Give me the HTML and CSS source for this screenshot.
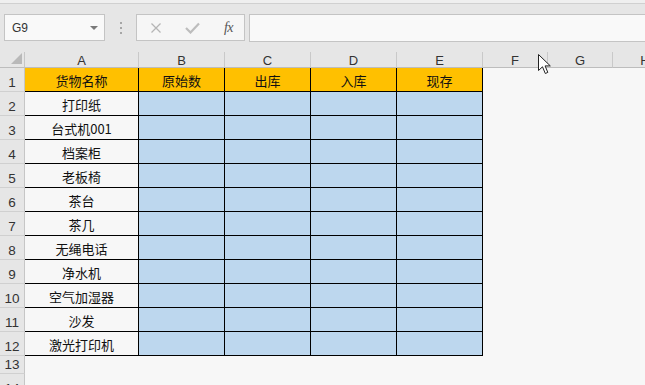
FILE: index.html
```html
<!DOCTYPE html>
<html lang="zh-CN">
<head>
    <meta charset="UTF-8">
    <title>货物库存</title>
    <link rel="stylesheet" href="styles.css">
</head>
<body>
    <div class="ribbon-edge"></div>

    <!-- Formula bar -->
    <div class="formula-bar">
        <div class="name-box">
            <span>G9</span>
            <svg class="caret" width="8" height="4" viewBox="0 0 8 4"><path d="M0 0H8L4 4Z" fill="#7a7a7a"/></svg>
        </div>
        <div class="grip"><i></i><i></i><i></i></div>
        <div class="fx-buttons">
            <svg class="btn" width="12" height="12" viewBox="0 0 12 12"><path d="M1.5 1.5L10.5 10.5M10.5 1.5L1.5 10.5" stroke="#b5b5b5" stroke-width="1.3"/></svg>
            <svg class="btn" width="15" height="12" viewBox="0 0 15 12"><path d="M1 6L5.5 10.5L14 1.5" stroke="#bdbdbd" stroke-width="2.2" fill="none"/></svg>
            <span class="fx">fx</span>
        </div>
        <div class="formula-input"></div>
    </div>

    <!-- Sheet grid -->
    <div class="sheet">
        <div class="corner">
            <svg width="11" height="11" viewBox="0 0 11 11"><path d="M11 0V11H0Z" fill="#b9b9b9"/></svg>
        </div>
        <div class="col-head">A</div>
        <div class="col-head">B</div>
        <div class="col-head">C</div>
        <div class="col-head">D</div>
        <div class="col-head">E</div>
        <div class="col-head">F</div>
        <div class="col-head">G</div>
        <div class="col-head">H</div>

        <div class="row-head">1</div>
        <div class="cell title">货物名称</div>
        <div class="cell title">原始数</div>
        <div class="cell title">出库</div>
        <div class="cell title">入库</div>
        <div class="cell title">现存</div>
        <div class="empty"></div><div class="empty"></div><div class="empty"></div>

        <div class="row-head">2</div>
        <div class="cell name">打印纸</div>
        <div class="cell data"></div><div class="cell data"></div><div class="cell data"></div><div class="cell data"></div>
        <div class="empty"></div><div class="empty"></div><div class="empty"></div>

        <div class="row-head">3</div>
        <div class="cell name">台式机001</div>
        <div class="cell data"></div><div class="cell data"></div><div class="cell data"></div><div class="cell data"></div>
        <div class="empty"></div><div class="empty"></div><div class="empty"></div>

        <div class="row-head">4</div>
        <div class="cell name">档案柜</div>
        <div class="cell data"></div><div class="cell data"></div><div class="cell data"></div><div class="cell data"></div>
        <div class="empty"></div><div class="empty"></div><div class="empty"></div>

        <div class="row-head">5</div>
        <div class="cell name">老板椅</div>
        <div class="cell data"></div><div class="cell data"></div><div class="cell data"></div><div class="cell data"></div>
        <div class="empty"></div><div class="empty"></div><div class="empty"></div>

        <div class="row-head">6</div>
        <div class="cell name">茶台</div>
        <div class="cell data"></div><div class="cell data"></div><div class="cell data"></div><div class="cell data"></div>
        <div class="empty"></div><div class="empty"></div><div class="empty"></div>

        <div class="row-head">7</div>
        <div class="cell name">茶几</div>
        <div class="cell data"></div><div class="cell data"></div><div class="cell data"></div><div class="cell data"></div>
        <div class="empty"></div><div class="empty"></div><div class="empty"></div>

        <div class="row-head">8</div>
        <div class="cell name">无绳电话</div>
        <div class="cell data"></div><div class="cell data"></div><div class="cell data"></div><div class="cell data"></div>
        <div class="empty"></div><div class="empty"></div><div class="empty"></div>

        <div class="row-head">9</div>
        <div class="cell name">净水机</div>
        <div class="cell data"></div><div class="cell data"></div><div class="cell data"></div><div class="cell data"></div>
        <div class="empty"></div><div class="empty"></div><div class="empty"></div>

        <div class="row-head">10</div>
        <div class="cell name">空气加湿器</div>
        <div class="cell data"></div><div class="cell data"></div><div class="cell data"></div><div class="cell data"></div>
        <div class="empty"></div><div class="empty"></div><div class="empty"></div>

        <div class="row-head">11</div>
        <div class="cell name">沙发</div>
        <div class="cell data"></div><div class="cell data"></div><div class="cell data"></div><div class="cell data"></div>
        <div class="empty"></div><div class="empty"></div><div class="empty"></div>

        <div class="row-head">12</div>
        <div class="cell name">激光打印机</div>
        <div class="cell data"></div><div class="cell data"></div><div class="cell data"></div><div class="cell data"></div>
        <div class="empty"></div><div class="empty"></div><div class="empty"></div>

        <div class="row-head short">13</div>
        <div class="empty"></div><div class="empty"></div><div class="empty"></div><div class="empty"></div>
        <div class="empty"></div><div class="empty"></div><div class="empty"></div><div class="empty"></div>

        <div class="row-head">14</div>
        <div class="empty"></div><div class="empty"></div><div class="empty"></div><div class="empty"></div>
        <div class="empty"></div><div class="empty"></div><div class="empty"></div><div class="empty"></div>
    </div>

    <!-- Mouse pointer over the F/G header -->
    <svg class="pointer" width="14" height="21" viewBox="0 0 14 21">
        <path d="M0.5 0.5V16.5L4.5 12.8L7.3 19.5L9.8 18.4L7.1 11.9H12.3Z" fill="#fff" stroke="#222" stroke-width="1"/>
    </svg>
</body>
</html>
```

FILE: styles.css
```css
html, body {
    margin: 0;
    padding: 0;
}
body {
    width: 645px;
    height: 385px;
    overflow: hidden;
    position: relative;
    background: #e6e6e6;
    font-family: "Liberation Sans", Arial, "Noto Sans CJK SC", sans-serif;
    color: #222;
}
.ribbon-edge {
    height: 3px;
    background: #efefef;
    border-bottom: 1px solid #d0d0d0;
}

/* formula bar */
.formula-bar {
    display: flex;
    align-items: stretch;
    height: 28px;
    padding: 10px 0 10px 4px;
}
.name-box {
    box-sizing: border-box;
    width: 101px;
    height: 27px;
    display: flex;
    align-items: center;
    justify-content: space-between;
    padding: 0 6px 0 7px;
    background: #f9f9f9;
    border: 1px solid #c4c4c4;
    font-size: 12px;
    color: #333;
}
.grip {
    width: 31px;
    display: flex;
    flex-direction: column;
    align-items: center;
    justify-content: center;
    gap: 3px;
}
.grip i {
    display: block;
    width: 2px;
    height: 2px;
    background: #a6a6a6;
}
.fx-buttons {
    box-sizing: border-box;
    width: 109px;
    height: 27px;
    display: flex;
    align-items: center;
    justify-content: space-between;
    padding: 0 11px 0 13px;
    background: #f6f6f6;
    border: 1px solid #c4c4c4;
}
.fx {
    font-family: "Liberation Serif", "Times New Roman", serif;
    font-style: italic;
    font-size: 14px;
    color: #555;
    letter-spacing: -0.5px;
}
.formula-input {
    flex: 1;
    margin-left: 4px;
    margin-right: -2px;
    background: #f9f9f9;
    border: 1px solid #c4c4c4;
}

/* sheet */
.sheet {
    display: grid;
    grid-template-columns: 25px 114px repeat(4, 86px) repeat(3, 65px);
    grid-template-rows: 16px repeat(12, 24px) 18px 24px;
    background: #f7f7f7;
}
.sheet > div {
    box-sizing: border-box;
}
.corner {
    background: #e6e6e6;
    border-right: 1px solid #c6c6c6;
    border-bottom: 1px solid #bdbdbd;
    display: flex;
    align-items: flex-end;
    justify-content: flex-end;
    padding: 0 2px 3px 0;
}
.corner svg {
    display: block;
}
.col-head {
    background: #e6e6e6;
    border-right: 1px solid #c9c9c9;
    border-bottom: 1px solid #bdbdbd;
    text-align: center;
    font-size: 13px;
    line-height: 17px;
    color: #333;
}
.row-head {
    background: #e6e6e6;
    border-right: 1px solid #c6c6c6;
    border-bottom: 1px solid #d0d0d0;
    display: flex;
    align-items: flex-end;
    justify-content: center;
    padding-bottom: 1px;
    font-size: 13.5px;
    color: #333;
}
.cell {
    display: flex;
    align-items: center;
    justify-content: center;
    padding-top: 2px;
    border-right: 1px solid #000;
    border-bottom: 1px solid #000;
    font-family: "Noto Sans CJK SC", "Liberation Sans", sans-serif;
    font-size: 13px;
    color: #111;
}
.title {
    background: #ffc000;
}
.name {
    background: #f7f7f7;
}
.data {
    background: #bdd7ee;
}

.pointer {
    position: absolute;
    left: 538px;
    top: 54px;
}
```
